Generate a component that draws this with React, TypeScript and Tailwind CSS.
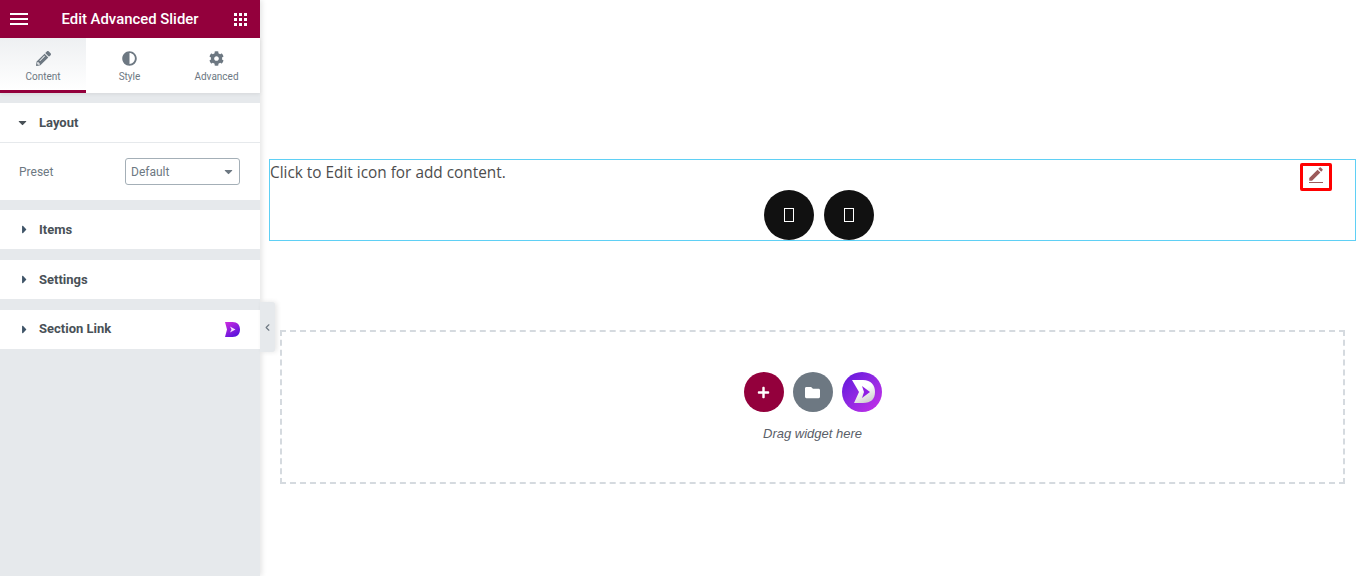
import React from 'react';
import { FaAdjust, FaCaretDown, FaCaretRight, FaCog, FaFolder, FaPencilAlt, FaPlus } from 'react-icons/fa';
import { MdEdit } from 'react-icons/md';
import { ChevronLeft } from 'lucide-react';

const SmallLogo: React.FC = () => (
  <svg viewBox="0 0 30 30" className="h-[15px] w-[15px]">
    <defs>
      <linearGradient id="small-logo" x1="0" y1="0" x2="0.6" y2="1">
        <stop offset="0" stopColor="#d02ce0" />
        <stop offset="1" stopColor="#5a12dc" />
      </linearGradient>
    </defs>
    <path d="M0 0h15c10 0 15 6 15 15s-5 15-15 15H0l4-15z" fill="url(#small-logo)" />
    <path d="M10 9l11 6-11 6 3-6z" fill="#f3dcff" />
  </svg>
);

const Tab: React.FC<{ icon: React.ReactNode; label: string; width: string; active?: boolean }> = ({ icon, label, width, active }) => (
  <div
    className={`flex flex-col items-center pt-[13px] text-[#6d7882] ${width} ${active ? 'border-b-[3px] border-[#93003c] bg-gradient-to-b from-[#eef0f2] to-white' : ''}`}
  >
    <div className="flex h-[15px] items-center text-[15px]">{icon}</div>
    <span className="mt-[4px] text-[10px] leading-[14px]">{label}</span>
  </div>
);

const Section: React.FC<{ label: string; right?: React.ReactNode }> = ({ label, right }) => (
  <div className="flex h-[39px] items-center bg-white pl-[22px] pr-[20px] text-[#495157]">
    <FaCaretRight className="h-[13px] w-[5px] text-[#3f5468]" />
    <span className={`ml-[12px] text-[13px] font-bold ${right ? 'mb-[2px]' : ''}`}>{label}</span>
    {right && <div className="ml-auto flex">{right}</div>}
  </div>
);

export default function App() {
  return (
    <div className="flex h-[576px] w-[1364px] overflow-hidden bg-white font-['Roboto',sans-serif]">
      <aside className="relative z-10 h-full w-[260px] shrink-0 bg-[#e6e9ec] shadow-[2px_0_5px_rgba(0,0,0,0.1)]">
        <header className="flex h-[38px] items-center justify-between bg-[#93003c] pl-[10px] pr-[13px] text-white">
          <div className="flex w-[18px] flex-col gap-[3px]">
            <span className="h-[2px] bg-white" />
            <span className="h-[2px] bg-white" />
            <span className="h-[2px] bg-white" />
          </div>
          <h1 className="mr-[2px] text-[14.9px] font-medium">Edit Advanced Slider</h1>
          <div className="grid grid-cols-3 gap-[2px]">
            {Array.from({ length: 9 }).map((_, i) => (
              <span key={i} className="h-[3px] w-[3px] bg-white" />
            ))}
          </div>
        </header>

        <nav className="flex h-[55px] bg-white shadow-[0_1px_4px_rgba(0,0,0,0.08)]">
          <Tab icon={<FaPencilAlt />} label="Content" width="w-[86px]" active />
          <Tab icon={<FaAdjust />} label="Style" width="w-[87px]" />
          <Tab icon={<FaCog />} label="Advanced" width="w-[87px]" />
        </nav>

        <div className="mt-[10px] bg-white">
          <div className="flex h-[40px] items-center border-b border-[#e6e9ec] pl-[16px] text-[#495157]">
            <FaCaretDown className="text-[13px] text-[#495157]" />
            <span className="ml-[10px] text-[13px] font-bold">Layout</span>
          </div>
          <div className="flex h-[57px] items-center justify-between pl-[19px] pr-[20px]">
            <span className="text-[12px] text-[#6d7882]">Preset</span>
            <div className="flex h-[27px] w-[115px] items-center justify-between rounded-[3px] border border-[#a4afb7] pl-[5px] pr-[4px] text-[12px] text-[#6d7882]">
              Default
              <FaCaretDown className="text-[13px] text-[#6d7882]" />
            </div>
          </div>
        </div>

        <div className="mt-[10px] flex flex-col gap-[11px]">
          <Section label="Items" />
          <Section label="Settings" />
          <Section label="Section Link" right={<SmallLogo />} />
        </div>

        <button className="absolute left-[260px] top-[302px] flex h-[50px] w-[15px] items-center justify-center rounded-r-[3px] bg-[#e6e9ec] text-[#6d7882] shadow-[2px_0_5px_rgba(0,0,0,0.1)]">
          <ChevronLeft size={11} strokeWidth={2.5} />
        </button>
      </aside>

      <main className="min-w-0 flex-1 pl-[9px] pr-[8px] pt-[159px]">
        <section className="relative h-[82px] border border-[#5fd0f5] font-['Open_Sans',sans-serif] text-[#4d4d4d]">
          <p className="pt-[1px] text-[15.36px] leading-[24px]">Click to Edit icon for add content.</p>
          <div className="absolute right-[23px] top-[3px] flex h-[28px] w-[32px] items-start justify-center rounded-[2px] border-[3px] border-[#ff0000] text-[#9b5a5a]">
            <div className="flex flex-col items-center">
              <MdEdit className="-mt-[1px] mr-[1px] text-[18px]" />
              <span className="-mt-[1px] h-[1px] w-[14px] bg-[#9b5a5a]" />
            </div>
          </div>
          <div className="absolute bottom-0 left-[494px] flex gap-[10px]">
            {[0, 1].map(i => (
              <div key={i} className="flex h-[50px] w-[50px] items-center justify-center rounded-full bg-[#111111]">
                <span className="h-[14px] w-[10px] border border-white" />
              </div>
            ))}
          </div>
        </section>

        <section className="mx-[11px] mt-[89px] flex h-[154px] flex-col items-center border-2 border-dashed border-[#d5dadf] pt-[40px]">
          <div className="flex gap-[9px]">
            <div className="flex h-[40px] w-[40px] items-center justify-center rounded-full bg-[#93003c] text-[13px] text-white">
              <FaPlus />
            </div>
            <div className="flex h-[40px] w-[40px] items-center justify-center rounded-full bg-[#6d7882] text-[15px] text-white">
              <FaFolder />
            </div>
            <div className="flex h-[40px] w-[40px] items-center justify-center rounded-full bg-gradient-to-br from-[#5f0fdc] to-[#c92de8]">
              <svg viewBox="0 0 40 40" className="h-[40px] w-[40px]">
                <defs>
                  <linearGradient id="big-logo" x1="0" y1="0" x2="0.5" y2="1">
                    <stop offset="0.5" stopColor="#ffffff" />
                    <stop offset="1" stopColor="#d4d4d4" />
                  </linearGradient>
                </defs>
                <path d="M10 8h11c8 0 12 5 12 12s-4 11-12 11h-9l5-11z" fill="url(#big-logo)" />
                <path d="M20 14l8 6-8 6 2-6z" fill="#8f1fe4" />
              </svg>
            </div>
          </div>
          <p className="mt-[12px] font-['Liberation_Sans',sans-serif] text-[13px] italic text-[#5a6068]">Drag widget here</p>
        </section>
      </main>
    </div>
  );
}
